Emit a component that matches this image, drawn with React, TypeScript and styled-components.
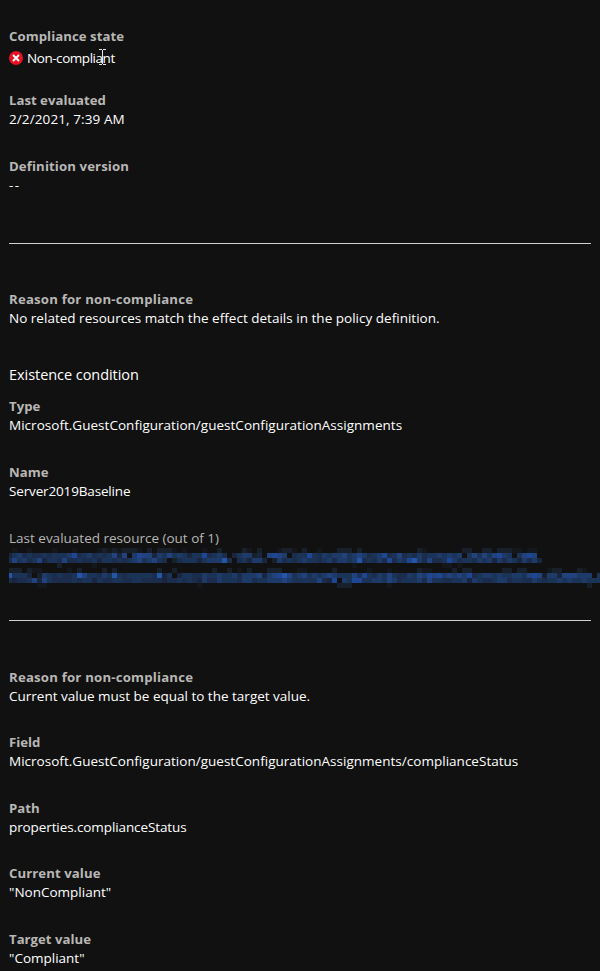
import React from "react";
import styled, { createGlobalStyle } from "styled-components";

const GlobalStyle = createGlobalStyle`
  html, body { margin: 0; background: #111111; }
  body { overflow: hidden; }
`;

const Panel = styled.main`
  box-sizing: border-box;
  width: 600px;
  height: 971px;
  padding: 26px 0 0 9px;
  overflow: hidden;
  background: #111111;
  color: #ffffff;
  font-family: "Open Sans", "Noto Sans", sans-serif;
  font-size: 13.5px;
  line-height: 21px;
`;

const Section = styled.section<{ $top?: number }>`
  display: flex;
  flex-direction: column;
  padding-top: ${(p) => p.$top ?? 0}px;
`;

const Item = styled.div<{ $gap?: number }>`
  display: flex;
  flex-direction: column;
  align-items: flex-start;
  margin-bottom: ${(p) => p.$gap ?? 28}px;
  white-space: nowrap;
`;

const Label = styled.div<{ $track?: number }>`
  height: 19px;
  color: #b8b7b5;
  font-size: 13.2px;
  font-weight: 700;
  letter-spacing: ${(p) => p.$track ?? 0}px;
`;

const PlainLabel = styled(Label)`
  font-size: 13.5px;
  font-weight: 400;
`;

const Value = styled.div<{ $track?: number }>`
  height: 19px;
  letter-spacing: ${(p) => p.$track ?? 0}px;
`;

const Status = styled.div`
  position: relative;
  display: flex;
  align-items: center;
  gap: 4px;
  height: 19px;
  margin-top: 3px;
`;

const Pointer = styled.svg`
  position: absolute;
  left: 89px;
  top: 1px;
`;

const Heading = styled.h2<{ $track?: number }>`
  margin: 0 0 12px;
  font-size: 14.5px;
  font-weight: 400;
  line-height: 19px;
  letter-spacing: ${(p) => p.$track ?? 0}px;
`;

const Divider = styled.hr`
  width: 582px;
  height: 1px;
  margin: 0;
  border: 0;
  background: #d2d0ce;
`;

const Redaction = styled.svg`
  display: block;
  height: 41px;
  width: 591px;
`;

const tones = ["#111111", "#14181d", "#17202b", "#1a2640", "#1b2c4c", "#1c3358", "#1e3a68", "#21427c", "#1f4694", "#2654a6"];

/* Tone of every cell in the solid bands, by band position. */
const bands: [number, string][] = [
  [1, "3564544545556845645457370687736575653558" + "45640356623078760455854656675676456845745" + "4645565656057575786505787"],
  [2, "4756457355474454453554545675675402455535" + "66694045366302645456554564665694546484658" + "96474458645546563646536463"],
  [5, "9555302654544597554659545555549350355446" + "55655646667367897567565676555758546575446" + "57687867676845665655665787266377766605787"],
  [6, "4344573754444545535445544554444344545436" + "44655546645566676555557438065885566576455" + "56475544556365445664554465455656556555896"],
];

/* Stray cells above and below the bands: columns of the fainter and of the stronger ones. */
const strays: [number, number[], number[]][] = [
  [0, [1, 4, 9, 13, 18, 20, 22, 26, 33, 35, 39, 48, 54, 57, 62, 83, 101, 102, 104, 105], [19, 21, 23, 24, 25, 28, 30, 31, 32, 42, 47, 50, 55, 56, 59, 66, 67, 68, 70, 82, 91, 92, 95, 96, 98, 99, 100]],
  [3, [17, 69, 87, 88, 90], [10]],
  [4, [5, 6, 12, 46, 58, 59, 72, 76, 83, 84, 108, 115], [0, 1, 2, 4, 14, 19, 21, 30, 33, 41, 44, 48, 52, 53, 54, 65, 82, 89, 91, 92, 99, 100, 102, 103, 109, 110, 114]],
  [7, [6, 7, 38, 76], [66, 67, 68, 116]],
];

interface CellProps {
  column: number;
  row: number;
  tone: number;
}

function Cell({ column, row, tone }: CellProps) {
  return <rect x={column * 5 - 2} y={row * 5 + 1} width="5" height="5" fill={tones[tone]} />;
}

function RedactedLink() {
  return (
    <Redaction viewBox="0 0 591 41" shapeRendering="crispEdges" role="img" aria-label="Redacted resource link">
      {bands.map(([row, cells]) =>
        [...cells].map((tone, column) => <Cell key={`${row}-${column}`} column={column} row={row} tone={Number(tone)} />),
      )}
      {strays.map(([row, faint, strong]) => (
        <g key={row}>
          {faint.map((column) => <Cell key={column} column={column} row={row} tone={1} />)}
          {strong.map((column) => <Cell key={column} column={column} row={row} tone={2} />)}
        </g>
      ))}
      <rect x="-1" y="15" width="1" height="2" fill="#1551e8" />
    </Redaction>
  );
}

function ErrorIcon() {
  return (
    <svg width="14" height="14" viewBox="0 0 14 14">
      <circle cx="7" cy="7" r="7" fill="#e81123" />
      <path d="M4 4L10 10M10 4L4 10" stroke="#ffffff" strokeWidth="1.9" />
    </svg>
  );
}

interface FieldProps {
  label: string;
  value: string;
  gap?: number;
  labelTrack?: number;
  valueTrack?: number;
}

function Field({ label, value, gap, labelTrack, valueTrack }: FieldProps) {
  return (
    <Item $gap={gap}>
      <Label $track={labelTrack}>{label}</Label>
      <Value $track={valueTrack}>{value}</Value>
    </Item>
  );
}

export default function App() {
  return (
    <>
      <GlobalStyle />
      <Panel>
        <Section>
          <Item $gap={23}>
            <Label $track={0.05}>Compliance state</Label>
            <Status>
              <ErrorIcon />
              <Value $track={-0.45}>Non-compliant</Value>
              <Pointer width="9" height="17" viewBox="0 0 9 17" shapeRendering="crispEdges">
                <path d="M1 .5H4M5 .5H8M4.5 1V15M1 15.5H4M5 15.5H8" fill="none" stroke="#e8e8e8" />
              </Pointer>
            </Status>
          </Item>
          <Field label="Last evaluated" value="2/2/2021, 7:39 AM" valueTrack={0.1} />
          <Field label="Definition version" value="--" gap={49} labelTrack={0.11} valueTrack={1.4} />
        </Section>
        <Divider />
        <Section $top={45}>
          <Field label="Reason for non-compliance" value="No related resources match the effect details in the policy definition." gap={38} labelTrack={0.2} valueTrack={0.015} />
          <Heading $track={-0.05}>Existence condition</Heading>
          <Field label="Type" value="Microsoft.GuestConfiguration/guestConfigurationAssignments" valueTrack={0.025} />
          <Field label="Name" value="Server2019Baseline" valueTrack={-0.15} />
          <Item $gap={32}>
            <PlainLabel>Last evaluated resource (out of 1)</PlainLabel>
            <RedactedLink />
          </Item>
        </Section>
        <Divider />
        <Section $top={46}>
          <Field label="Reason for non-compliance" value="Current value must be equal to the target value." gap={27} labelTrack={0.2} />
          <Field label="Field" value="Microsoft.GuestConfiguration/guestConfigurationAssignments/complianceStatus" valueTrack={0.02} />
          <Field label="Path" value="properties.complianceStatus" gap={27} valueTrack={-0.1} />
          <Field label="Current value" value={'"NonCompliant"'} labelTrack={0.07} />
          <Field label="Target value" value={'"Compliant"'} gap={0} />
        </Section>
      </Panel>
    </>
  );
}
